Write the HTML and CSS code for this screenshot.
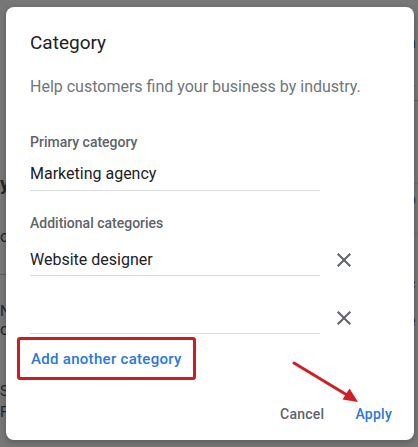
FILE: index.html
```html
<!DOCTYPE html>
<html lang="en">
<head>
<meta charset="utf-8">
<title>Category</title>
<link rel="stylesheet" href="styles.css">
</head>
<body>
<div class="page">
  <span class="frag frag-y">y</span>
  <span class="frag frag-o1">o</span>
  <span class="rule rule-l1"></span>
  <span class="frag frag-n">N</span>
  <span class="frag frag-o2">o</span>
  <span class="frag frag-s">S</span>
  <span class="frag frag-f">F</span>
  <span class="frag frag-h">h</span>
  <span class="frag frag-r">r</span>
  <span class="rule rule-r1"></span>
  <span class="rule rule-r2"></span>
  <span class="frag frag-p">p</span>
  <span class="rule rule-r3"></span>
  <span class="frag frag-c">c</span>
  <span class="frag frag-e">e</span>
</div>

<div class="dialog">
  <h2 class="title">Category</h2>
  <p class="desc">Help customers find your business by industry.</p>

  <div class="label label-primary">Primary category</div>
  <div class="field field-primary">Marketing agency</div>

  <div class="label label-additional">Additional categories</div>
  <div class="row row-first">
    <div class="field">Website designer</div>
    <button class="remove" aria-label="Remove">
      <svg viewBox="0 0 24 24" width="24" height="24"><path d="M19 6.41L17.59 5 12 10.59 6.41 5 5 6.41 10.59 12 5 17.59 6.41 19 12 13.41 17.59 19 19 17.59 13.41 12z"/></svg>
    </button>
  </div>
  <div class="row row-second">
    <div class="field"></div>
    <button class="remove" aria-label="Remove">
      <svg viewBox="0 0 24 24" width="24" height="24"><path d="M19 6.41L17.59 5 12 10.59 6.41 5 5 6.41 10.59 12 5 17.59 6.41 19 12 13.41 17.59 19 19 17.59 13.41 12z"/></svg>
    </button>
  </div>

  <button class="add-btn">Add another category</button>

  <div class="actions">
    <button class="btn btn-cancel">Cancel</button>
    <button class="btn btn-apply">Apply</button>
  </div>
</div>

<svg class="arrow" viewBox="0 0 418 447" width="418" height="447">
  <line x1="294" y1="363" x2="347" y2="395" stroke="#cf1f26" stroke-width="3" stroke-linecap="round"/>
  <polygon points="358,402 342.5,399.5 349.5,388.5" fill="#cf1f26"/>
</svg>
</body>
</html>
```

FILE: styles.css
```css
* { box-sizing: border-box; }

html, body {
  margin: 0;
  padding: 0;
}

body {
  width: 418px;
  height: 447px;
  overflow: hidden;
  position: relative;
  background: #777777;
  font-family: Roboto, "Liberation Sans", Arial, sans-serif;
}

.page {
  position: absolute;
  inset: 0;
}

.frag {
  position: absolute;
  color: #262626;
  font-size: 16px;
  line-height: 20px;
}
.frag-y { left: 0; top: 174px; font-weight: 700; font-size: 19px; }
.frag-o1 { left: 0; top: 227px; }
.frag-n { left: 0; top: 301px; font-size: 15px; }
.frag-o2 { left: 0; top: 320px; }
.frag-s { left: 0; top: 381px; font-size: 15px; }
.frag-f { left: 0; top: 402px; font-size: 15px; }
.frag-h { left: 407px; top: 33px; }
.frag-r { left: 409px; top: 79px; }
.frag-p { left: 407px; top: 190px; color: #2e3f63; }
.frag-c { left: 407px; top: 274px; }
.frag-e { left: 407px; top: 311px; }

.rule {
  position: absolute;
  height: 1px;
  background: #5e5e5e;
}
.rule-l1 { left: 0; top: 274px; width: 7px; }
.rule-r1 { left: 413px; top: 100px; width: 5px; }
.rule-r2 { left: 413px; top: 183px; width: 5px; background: #6c6c6c; }
.rule-r3 { left: 413px; top: 233px; width: 5px; background: #6c6c6c; }

.dialog {
  position: absolute;
  left: 6px;
  top: 7px;
  width: 408px;
  height: 433px;
  background: #ffffff;
  border-radius: 8px;
  box-shadow: 0 2px 6px rgba(0, 0, 0, 0.25);
  padding: 24px 22px 0 24px;
  display: flex;
  flex-direction: column;
}

.title {
  margin: 0;
  font-size: 19px;
  line-height: 24px;
  font-weight: 400;
  color: #202124;
}

.desc {
  margin: 20px 0 0;
  font-size: 16px;
  line-height: 24px;
  color: #70757a;
}

.label {
  font-size: 14px;
  line-height: 20px;
  font-weight: 500;
  color: #5f6368;
}
.label-primary { margin-top: 33px; }
.label-additional { margin-top: 22px; }

.field {
  width: 290px;
  height: 28px;
  font-size: 16px;
  line-height: 24px;
  color: #202124;
  padding-bottom: 4px;
  border-bottom: 1px solid #dadce0;
}
.field-primary { height: 39px; padding-top: 10px; }

.row {
  display: flex;
  align-items: flex-start;
}
.row-first { padding-top: 15px; }
.row-second { margin-top: 13px; padding-top: 17px; }

.remove {
  width: 24px;
  height: 24px;
  margin: 0 0 0 12px;
  padding: 0;
  border: none;
  background: none;
  display: flex;
  align-items: center;
  justify-content: center;
}
.remove svg { fill: #5f6368; display: block; }

.add-btn {
  align-self: flex-start;
  margin: 3px 0 0 -13px;
  border: 3px solid #cc1d25;
  border-radius: 3px;
  background: #ffffff;
  padding: 9px 11px 8px;
  font-family: Roboto, "Liberation Sans", Arial, sans-serif;
  font-size: 15px;
  line-height: 20px;
  font-weight: 500;
  letter-spacing: 0.3px;
  color: #2a78db;
}

.actions {
  display: flex;
  justify-content: flex-end;
  gap: 31px;
  margin-top: 24px;
}

.btn {
  padding: 0;
  border: none;
  background: none;
  font-family: Roboto, "Liberation Sans", Arial, sans-serif;
  font-size: 14px;
  line-height: 20px;
  font-weight: 500;
  letter-spacing: 0.25px;
}
.btn-cancel { color: #5f6368; }
.btn-apply { color: #2a78db; }

.arrow {
  position: absolute;
  left: 0;
  top: 0;
  pointer-events: none;
}
```
